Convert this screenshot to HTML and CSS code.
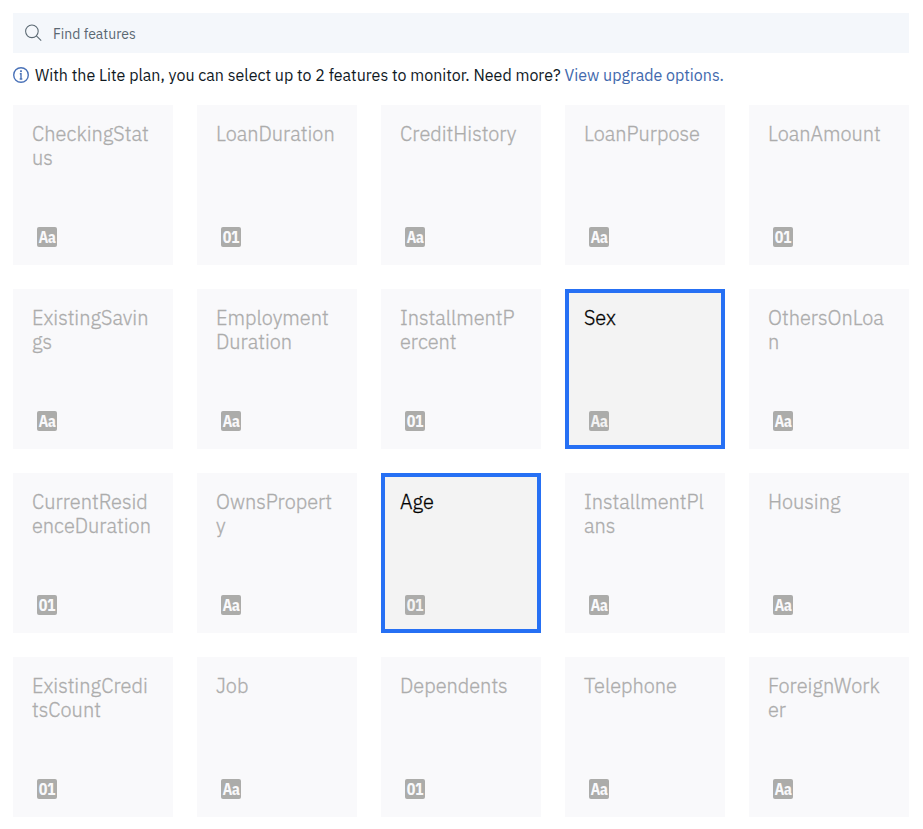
FILE: index.html
```
<!DOCTYPE html>
<html lang="en">
<head>
<meta charset="utf-8">
<title>Select features</title>
<link rel="stylesheet" href="styles.css">
</head>
<body>
<main class="page">
<label class="search">
<svg class="search-icon" viewBox="0 0 18 18"><circle cx="6.9" cy="7.3" r="6.3"/><path d="M11.4 11.8 16.2 16.6"/></svg>
<span>Find features</span>
</label>
<p class="notice">
<svg class="info-icon" viewBox="0 0 16 16"><circle cx="8" cy="8" r="7.3"/><path d="M6.8 6.8H8V12M6.7 12H9.3"/><rect x="7.1" y="3.3" width="1.8" height="1.8"/></svg>
<span class="message">With the Lite plan, you can select up to 2 features to monitor. Need more?</span>
<a class="upgrade">View upgrade options.</a>
</p>
<section class="grid">
<article class="card"><h2>CheckingStat<br>us</h2><span class="type">Aa</span></article>
<article class="card"><h2>LoanDuration</h2><span class="type">01</span></article>
<article class="card"><h2>CreditHistory</h2><span class="type">Aa</span></article>
<article class="card"><h2>LoanPurpose</h2><span class="type">Aa</span></article>
<article class="card"><h2>LoanAmount</h2><span class="type">01</span></article>
<article class="card"><h2>ExistingSavin<br>gs</h2><span class="type">Aa</span></article>
<article class="card"><h2>Employment<br>Duration</h2><span class="type">Aa</span></article>
<article class="card"><h2>InstallmentP<br>ercent</h2><span class="type">01</span></article>
<article class="card selected"><h2>Sex</h2><span class="type">Aa</span></article>
<article class="card"><h2>OthersOnLoa<br>n</h2><span class="type">Aa</span></article>
<article class="card"><h2>CurrentResid<br>enceDuration</h2><span class="type">01</span></article>
<article class="card"><h2>OwnsPropert<br>y</h2><span class="type">Aa</span></article>
<article class="card selected"><h2>Age</h2><span class="type">01</span></article>
<article class="card"><h2>InstallmentPl<br>ans</h2><span class="type">Aa</span></article>
<article class="card"><h2>Housing</h2><span class="type">Aa</span></article>
<article class="card"><h2>ExistingCredi<br>tsCount</h2><span class="type">01</span></article>
<article class="card"><h2>Job</h2><span class="type">Aa</span></article>
<article class="card"><h2>Dependents</h2><span class="type">01</span></article>
<article class="card"><h2>Telephone</h2><span class="type">Aa</span></article>
<article class="card"><h2>ForeignWork<br>er</h2><span class="type">Aa</span></article>
</section>
</main>
</body>
</html>
```
FILE: styles.css
```
* { box-sizing: border-box; }
body { margin: 0; background: #fff; font-family: "IBM Plex Sans", Roboto, sans-serif; }
.page { width: 896px; margin: 13px 0 0 13px; }
.search { display: flex; align-items: center; height: 40px; padding-left: 12px; gap: 10px; background: #f4f7fb; color: #5a6872; font-size: 14px; }
.search span { padding-top: 2px; }
.search-icon { width: 18px; height: 18px; fill: none; stroke: #5a6872; stroke-width: 1.05; }
.notice { display: flex; align-items: center; height: 20px; margin: 12px 0 20px; font-size: 16px; line-height: 20px; white-space: nowrap; }
.info-icon { width: 16px; height: 16px; margin-right: 6px; fill: none; stroke: #4a72b8; stroke-width: 1.4; }
.info-icon rect { fill: #4a72b8; stroke: none; }
.message { color: #10191f; }
.upgrade { margin-left: 4px; color: #4269ad; }
.grid { display: grid; grid-template-columns: repeat(5, 160px); grid-auto-rows: 160px; gap: 24px; }
.card { display: flex; flex-direction: column; justify-content: space-between; align-items: flex-start; padding: 17px 19px 18px; background: #f9f9fb; color: #acacac; }
.card h2 { margin: 0; font-size: 20px; line-height: 24px; font-weight: 300; white-space: nowrap; -webkit-text-stroke: 0.3px currentColor; }
.type { display: flex; justify-content: center; width: 20px; height: 20px; margin-left: 5px; border-radius: 2px; background: #acacaa; color: #f9f9fb; font-family: "IBM Plex Sans Condensed", "IBM Plex Sans", Roboto, sans-serif; font-size: 16px; line-height: 19px; padding-top: 1px; font-weight: 700; letter-spacing: -0.5px; }
.selected { padding: 13px 15px 14px; border: 4px solid #2670f4; background: #f3f3f3; color: #000; }
.selected .type { color: #f3f3f3; }
```
